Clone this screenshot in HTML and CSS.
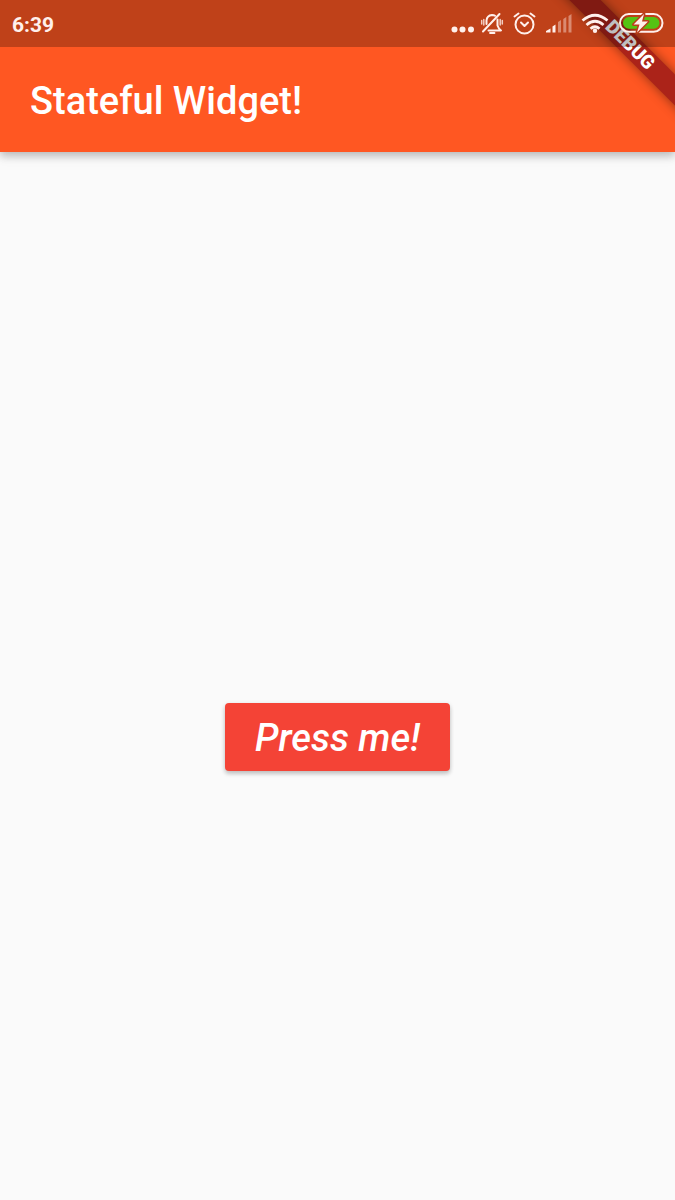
FILE: index.html
```html
<!DOCTYPE html>
<html lang="en">
<head>
<meta charset="utf-8">
<meta name="viewport" content="width=device-width, initial-scale=1">
<title>Stateful Widget!</title>
<link rel="stylesheet" href="styles.css">
</head>
<body>
<div class="app">
  <header class="app-bar">
    <h1 class="title">Stateful Widget!</h1>
  </header>
  <main class="content">
    <button class="press" type="button">Press me!</button>
  </main>
  <div class="banner-corner"><div class="banner">DEBUG</div></div>
  <div class="status-bar">
    <time class="clock">6:39</time>
    <svg class="icons" width="216" height="47" viewBox="450 0 216 47" fill="none" stroke="#fff0ec" stroke-width="2" stroke-linecap="round" stroke-linejoin="round" aria-hidden="true">
      <g fill="#fff0ec" stroke="none">
        <circle cx="454.500" cy="29.500" r="3"/><circle cx="462.500" cy="29.500" r="3"/><circle cx="471" cy="29.500" r="3"/>
      </g>
      <g>
        <path d="M483 31.500L499.500 14"/>
        <path d="M486.500 24V20.500Q487 15.500 492 15Q494 15 495 15.800M497.500 19.500V25.500Q498.500 28.500 501 30.500H488.500"/>
        <path d="M490 33h4.500" stroke-width="1.800"/>
        <path d="M481.700 20.500v3.500M483.800 19.500v5.500M500.200 19.500v5.500M502.300 20.500v3.500" stroke-width="1.500" opacity=".8"/>
      </g>
      <g>
        <circle cx="524.500" cy="24.500" r="9"/>
        <path d="M521 22.500L524.500 26L528 22.500M514.500 16.500L518.500 13.500M530.500 13.500L534.500 16.500"/>
      </g>
      <g fill="#fff0ec" stroke="none">
        <path d="M546 32.500v-1.500l4.500-2.500v4zM552.500 26.500l3-2v8h-3z"/>
        <path d="M558 22l3-2v12.500h-3zM563.300 19l3-2v15.500h-3zM568.500 16l3-2v18.500h-3z" opacity=".42"/>
      </g>
      <g stroke-width="2.800" stroke-linecap="butt">
        <path d="M582.500 20.500Q595 10 607.500 20.500M586.500 25Q595 17.500 603.500 25M590.500 28.800Q595 24.800 599.500 28.800"/>
        <circle cx="595" cy="30.800" r="2.200" fill="#fff0ec" stroke="none"/>
      </g>
      <rect x="620" y="14" width="42.500" height="17.800" rx="8.900"/>
      <rect x="623" y="17" width="36.500" height="11.800" rx="5.900" fill="#55c313" stroke="none"/>
      <path d="M644 14L633.500 24.500H639.500L637 32.500L648 21.500H642Z" fill="#fff0ec" stroke="#b93d1a" stroke-width="3" paint-order="stroke"/>
    </svg>
  </div>
</div>
</body>
</html>
```
FILE: styles.css
```css
* {
  box-sizing: border-box;
}

body {
  margin: 0;
  background: #fafafa;
  font-family: Roboto, "Liberation Sans", sans-serif;
}

.app {
  position: relative;
  display: flex;
  flex-direction: column;
  min-height: 100vh;
  overflow: hidden;
}

.app-bar {
  padding: 78px 30px 28px;
  background: #ff5722;
  box-shadow: 0 4px 8px rgba(0, 0, 0, .2), 0 2px 14px rgba(0, 0, 0, .1);
}

.title {
  margin: 0;
  color: #fff;
  font-size: 38px;
  line-height: 46px;
  font-weight: 500;
}

.content {
  flex: 1;
  display: flex;
  align-items: center;
  justify-content: center;
  padding-top: 121px;
}

.press {
  padding: 13px 30px 11px;
  border: 0;
  border-radius: 4px;
  background: #f44336;
  color: #fff;
  font: italic 500 38px/44px Roboto, "Liberation Sans", sans-serif;
  box-shadow: 0 3px 4px rgba(0, 0, 0, .18), 0 1px 5px rgba(0, 0, 0, .1);
  cursor: pointer;
}

.banner-corner {
  position: absolute;
  top: 0;
  right: 0;
  width: 140px;
  height: 140px;
  overflow: hidden;
  pointer-events: none;
}

.banner {
  position: absolute;
  top: 34px;
  right: -55px;
  width: 200px;
  height: 22px;
  transform: rotate(45deg);
  background: #ab2319;
  box-shadow: 0 0 12px rgba(0, 0, 0, .45);
  color: #fff;
  font-size: 19px;
  line-height: 22px;
  font-weight: 900;
  text-align: center;
}

.status-bar {
  position: absolute;
  top: 0;
  left: 0;
  right: 0;
  display: flex;
  align-items: center;
  justify-content: space-between;
  height: 47px;
  padding: 0 9px 0 12px;
  background: rgba(0, 0, 0, .25);
}

.clock {
  padding-top: 2px;
  color: #fff0ec;
  font-size: 21px;
  line-height: 26px;
  font-weight: 700;
}
```
